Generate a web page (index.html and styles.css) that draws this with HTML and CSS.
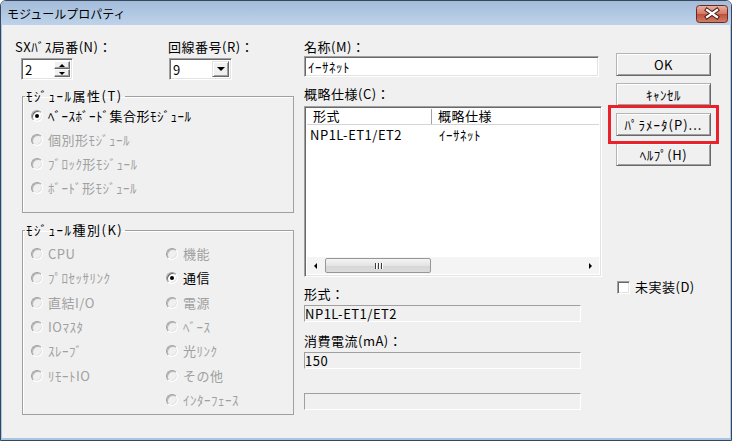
FILE: index.html
```html
<!DOCTYPE html>
<html lang="ja">
<head>
    <meta charset="UTF-8"><meta name="viewport" content="width=device-width, initial-scale=1.0"><title>モジュールプロパティ</title>
    <link rel="stylesheet" href="styles.css">
</head>
<body>
<div class="window">
    <div class="titlebar">
        <span class="title">モジュールプロパティ</span>
        <span class="close-btn">
            <svg width="32" height="18" viewBox="0 0 32 18">
                <defs>
                    <linearGradient id="cg" x1="0" y1="0" x2="0" y2="1">
                        <stop offset="0" stop-color="#eab2a4"/>
                        <stop offset="0.48" stop-color="#d67a66"/>
                        <stop offset="0.52" stop-color="#c0503a"/>
                        <stop offset="1" stop-color="#d2806a"/>
                    </linearGradient>
                </defs>
                <rect x="0.5" y="0.5" width="31" height="17" rx="3" fill="url(#cg)" stroke="#6a2a22"/>
                <path d="M11 5 L21 12 M21 5 L11 12" stroke="#4a2019" stroke-width="4.2" stroke-linecap="square"/>
                <path d="M11 5 L21 12 M21 5 L11 12" stroke="#fff" stroke-width="2.2" stroke-linecap="square"/>
            </svg>
        </span>
    </div>
    <div class="client">
        <!-- left column -->
        <div class="col-left">
            <div class="top-row">
                <div class="sx-field">
                    <div class="lbl">SXﾊﾞｽ局番(N)：</div>
                    <div class="spin sunken">
                        <span class="spin-value">2</span>
                        <span class="spin-btns">
                            <span class="spin-btn"><i class="tri-up"></i></span>
                            <span class="spin-btn"><i class="tri-down"></i></span>
                        </span>
                    </div>
                </div>
                <div class="line-field">
                    <div class="lbl">回線番号(R)：</div>
                    <div class="combo sunken">
                        <span class="combo-value">9</span>
                        <span class="combo-btn"><i class="tri-down big"></i></span>
                    </div>
                </div>
            </div>

            <fieldset class="group group-attr">
                <legend>ﾓｼﾞｭｰﾙ属性(T)</legend>
                <div class="opt"><span class="radio checked"></span>ﾍﾞｰｽﾎﾞｰﾄﾞ集合形ﾓｼﾞｭｰﾙ</div>
                <div class="opt disabled"><span class="radio"></span>個別形ﾓｼﾞｭｰﾙ</div>
                <div class="opt disabled"><span class="radio"></span>ﾌﾞﾛｯｸ形ﾓｼﾞｭｰﾙ</div>
                <div class="opt disabled"><span class="radio"></span>ﾎﾞｰﾄﾞ形ﾓｼﾞｭｰﾙ</div>
            </fieldset>

            <fieldset class="group group-kind">
                <legend>ﾓｼﾞｭｰﾙ種別(K)</legend>
                <div class="kind-cols">
                    <div class="kind-col">
                        <div class="opt disabled"><span class="radio"></span>CPU</div>
                        <div class="opt disabled"><span class="radio"></span>ﾌﾟﾛｾｯｻﾘﾝｸ</div>
                        <div class="opt disabled"><span class="radio"></span>直結I/O</div>
                        <div class="opt disabled"><span class="radio"></span>IOﾏｽﾀ</div>
                        <div class="opt disabled"><span class="radio"></span>ｽﾚｰﾌﾞ</div>
                        <div class="opt disabled"><span class="radio"></span>ﾘﾓｰﾄIO</div>
                    </div>
                    <div class="kind-col">
                        <div class="opt disabled"><span class="radio"></span>機能</div>
                        <div class="opt"><span class="radio checked"></span>通信</div>
                        <div class="opt disabled"><span class="radio"></span>電源</div>
                        <div class="opt disabled"><span class="radio"></span>ﾍﾞｰｽ</div>
                        <div class="opt disabled"><span class="radio"></span>光ﾘﾝｸ</div>
                        <div class="opt disabled"><span class="radio"></span>その他</div>
                        <div class="opt disabled"><span class="radio"></span>ｲﾝﾀｰﾌｪｰｽ</div>
                    </div>
                </div>
            </fieldset>
        </div>

        <!-- middle column -->
        <div class="col-mid">
            <div class="lbl">名称(M)：</div>
            <div class="name-input sunken">ｲｰｻﾈｯﾄ</div>

            <div class="lbl lbl-spec">概略仕様(C)：</div>
            <div class="list sunken">
                <div class="list-head">
                    <span class="head-cell col-type">形式</span>
                    <span class="head-cell col-spec">概略仕様</span>
                </div>
                <div class="list-body">
                    <div class="list-row">
                        <span class="col-type">NP1L-ET1/ET2</span>
                        <span class="col-spec">ｲｰｻﾈｯﾄ</span>
                    </div>
                </div>
                <div class="hscroll">
                    <span class="sb-arrow"><i class="tri-left"></i></span>
                    <span class="sb-track">
                        <span class="sb-thumb"><i class="grip"></i><i class="grip"></i><i class="grip"></i></span>
                    </span>
                    <span class="sb-arrow"><i class="tri-right"></i></span>
                </div>
            </div>

            <div class="lbl lbl-type">形式：</div>
            <div class="ro-field">NP1L-ET1/ET2</div>
            <div class="lbl lbl-current">消費電流(mA)：</div>
            <div class="ro-field">150</div>
            <div class="ro-field ro-empty"></div>
        </div>

        <!-- right column -->
        <div class="col-right">
            <div class="btn">OK</div>
            <div class="btn">ｷｬﾝｾﾙ</div>
            <div class="btn btn-param">ﾊﾟﾗﾒｰﾀ(P)...</div>
            <div class="btn">ﾍﾙﾌﾟ(H)</div>
            <div class="check-row"><span class="checkbox"></span>未実装(D)</div>
        </div>
    </div>
</div>
</body>
</html>
```

FILE: styles.css
```css
body {
    margin: 0;
    background: #ffffff;
    font-family: "Noto Sans CJK JP", "Liberation Sans", sans-serif;
    font-size: 12px;
    color: #000;
}

.window {
    width: 732px;
    height: 441px;
    box-sizing: border-box;
    border: 1px solid #37485c;
    border-radius: 6px 6px 0 0;
    overflow: hidden;
    display: flex;
    flex-direction: column;
}

.titlebar {
    height: 24px;
    flex: none;
    display: flex;
    align-items: flex-start;
    justify-content: space-between;
    padding: 4px 3px 0 6px;
    box-sizing: border-box;
    background: linear-gradient(#a3bcda, #bed3ea);
}
.title {
    line-height: 16px;
    padding-top: 1px;
}
.close-btn svg {
    display: block;
}

.client {
    flex: 1;
    display: flex;
    background: #f0f0f0;
    border: 1px solid #a9c5e4;
    border-top: none;
    border-bottom-width: 2px;
    font-size: 13px;
    letter-spacing: 0.5px;
}

/* shared pieces */
.lbl {
    line-height: 16px;
    height: 16px;
    white-space: nowrap;
}
.sunken {
    box-sizing: border-box;
    border: 1px solid;
    border-color: #a0a0a0 #ffffff #ffffff #a0a0a0;
    box-shadow: inset 1px 1px #696969, inset -1px -1px #e3e3e3;
    background: #ffffff;
}
.tri-up, .tri-down, .tri-left, .tri-right {
    display: block;
    width: 0;
    height: 0;
}
.tri-up {
    border-left: 3px solid transparent;
    border-right: 3px solid transparent;
    border-bottom: 3px solid #000;
}
.tri-down {
    border-left: 3px solid transparent;
    border-right: 3px solid transparent;
    border-top: 3px solid #000;
}
.tri-down.big {
    border-left-width: 4px;
    border-right-width: 4px;
    border-top-width: 4px;
}
.tri-left {
    border-top: 3px solid transparent;
    border-bottom: 3px solid transparent;
    border-right: 3px solid #000;
}
.tri-right {
    border-top: 3px solid transparent;
    border-bottom: 3px solid transparent;
    border-left: 3px solid #000;
}

/* left column */
.col-left {
    width: 302px;
    box-sizing: border-box;
    padding: 14px 0 0 13px;
    flex: none;
}
.top-row {
    display: flex;
}
.sx-field {
    width: 153px;
}
.spin {
    margin: 3px 0 0 6px;
    width: 52px;
    height: 22px;
    display: flex;
    padding: 2px;
}
.spin-value {
    flex: 1;
    line-height: 18px;
    padding-left: 1px;
}
.spin-btns {
    display: flex;
    flex-direction: column;
    width: 16px;
}
.spin-btn {
    flex: 1;
    display: flex;
    align-items: center;
    justify-content: center;
    background: #f0f0f0;
    border: 1px solid;
    border-color: #ffffff #696969 #696969 #ffffff;
    box-shadow: inset -1px -1px #a0a0a0;
}
.combo {
    margin: 3px 0 0 1px;
    width: 63px;
    height: 22px;
    display: flex;
    padding: 2px;
}
.combo-value {
    flex: 1;
    line-height: 18px;
    padding-left: 1px;
}
.combo-btn {
    width: 17px;
    box-sizing: border-box;
    display: flex;
    align-items: center;
    justify-content: center;
    background: #f0f0f0;
    border: 1px solid;
    border-color: #e3e3e3 #696969 #696969 #e3e3e3;
    box-shadow: inset 1px 1px #fff, inset -1px -1px #a0a0a0;
}

.group {
    margin: 0 0 0 7px;
    padding: 0;
    min-width: 0;
    width: 272px;
    box-sizing: border-box;
    border: 1px solid #a0a0a0;
    box-shadow: inset 1px 1px #fff;
}
.group legend {
    margin-left: 2px;
    padding: 0 2px 0 1px;
    line-height: 16px;
    letter-spacing: 1.5px;
}
.group-attr {
    margin-top: 8px;
    padding-bottom: 12px;
}
.group-kind {
    margin-top: 9px;
    padding: 4px 0 2px;
}
.kind-cols {
    display: flex;
}
.kind-col {
    width: 139px;
}
.group-kind .opt {
    height: 24.3px;
}

.opt {
    height: 24px;
    display: flex;
    align-items: center;
    gap: 5px;
    padding-left: 8px;
    line-height: 16px;
    white-space: nowrap;
}
.opt.disabled {
    color: #a0a0a0;
}
.radio {
    position: relative;
    width: 12px;
    height: 12px;
    box-sizing: border-box;
    border-radius: 50%;
    border: 1px solid;
    border-color: #a0a0a0 #ffffff #ffffff #a0a0a0;
    box-shadow: inset 1px 1px #696969, inset -1px -1px #e3e3e3;
    background: #ffffff;
    flex: none;
}
.opt.disabled .radio {
    background: #f0f0f0;
    box-shadow: inset 1px 1px #b4b4b4, inset -1px -1px #e3e3e3;
}
.radio.checked::after {
    content: "";
    position: absolute;
    left: 3px;
    top: 3px;
    width: 4px;
    height: 4px;
    border-radius: 50%;
    background: #000;
}

/* middle column */
.col-mid {
    width: 298px;
    flex: none;
    padding-top: 14px;
}
.name-input {
    margin-top: 1px;
    width: 295px;
    height: 21px;
    padding-left: 3px;
    line-height: 19px;
}
.lbl-spec {
    margin-top: 9px;
}
.list {
    margin-top: 4px;
    width: 298px;
    height: 171px;
    padding: 2px;
    display: flex;
    flex-direction: column;
}
.list-head {
    display: flex;
    height: 16px;
    flex: none;
    background: #ffffff;
    border-bottom: 1px solid #d5d5d5;
    box-sizing: border-box;
}
.head-cell {
    line-height: 14px;
}
.col-type {
    width: 125px;
    box-sizing: border-box;
    padding-left: 4px;
}
.head-cell.col-type {
    border-right: 1px solid #a0a0a0;
    box-shadow: 1px 0 #fff;
    padding-left: 6px;
}
.col-spec {
    padding-left: 6px;
}
.list-body {
    flex: 1;
    background: #ffffff;
}
.list-row {
    display: flex;
    line-height: 16px;
    padding-top: 2px;
}
.list-row .col-type {
    padding-left: 3px;
}
.list-row .col-spec {
    padding-left: 7px;
}
.hscroll {
    height: 17px;
    flex: none;
    display: flex;
    background: #f4f4f4;
}
.sb-arrow {
    width: 17px;
    display: flex;
    align-items: center;
    justify-content: center;
}
.sb-track {
    flex: 1;
    display: flex;
    align-items: center;
}
.sb-thumb {
    width: 106px;
    height: 15px;
    margin-left: 1px;
    box-sizing: border-box;
    border: 1px solid #979797;
    border-radius: 2px;
    background: linear-gradient(to bottom, #f4f4f4, #e4e4e4 50%, #d6d6d6 51%, #dcdcdc);
    display: flex;
    align-items: center;
    justify-content: center;
    gap: 2px;
}
.grip {
    display: block;
    width: 1px;
    height: 6px;
    background: #3c3c3c;
    box-shadow: 1px 0 #fff;
}

.ro-field {
    width: 277px;
    height: 17px;
    box-sizing: border-box;
    background: #f0f0f0;
    border: 1px solid;
    border-color: #a0a0a0 #ffffff #ffffff #a0a0a0;
    line-height: 15px;
    margin-top: 3px;
}
.lbl-type {
    margin-top: 9px;
}
.lbl-current {
    margin-top: 11px;
}
.ro-empty {
    margin-top: 24px;
}

/* right column */
.col-right {
    width: 95px;
    flex: none;
    margin-left: 14px;
    padding-top: 28px;
}
.btn {
    height: 23px;
    box-sizing: border-box;
    margin-bottom: 7px;
    display: flex;
    align-items: center;
    justify-content: center;
    background: #f0f0f0;
    border: 1px solid;
    border-color: #b4b4b4 #696969 #696969 #b4b4b4;
    box-shadow: inset 1px 1px #ffffff, inset -1px -1px #a0a0a0;
    line-height: 16px;
}
.btn-param {
    outline: 3px solid #e8212b;
    outline-offset: 5px;
    letter-spacing: 1px;
}
.check-row {
    margin-top: 113px;
    display: flex;
    align-items: center;
    gap: 5px;
    padding-left: 1px;
    line-height: 16px;
}
.checkbox {
    width: 13px;
    height: 13px;
    box-sizing: border-box;
    border: 1px solid;
    border-color: #a0a0a0 #ffffff #ffffff #a0a0a0;
    box-shadow: inset 1px 1px #696969, inset -1px -1px #e3e3e3;
    background: #ffffff;
}
```
